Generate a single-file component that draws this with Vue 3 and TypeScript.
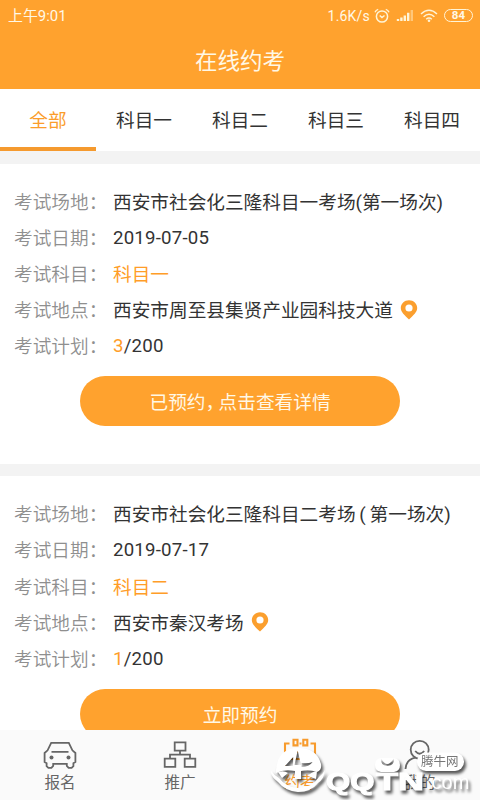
<script setup lang="ts">
import { ref } from 'vue'

interface Exam {
  id: number;
  place: string;
  date: string;
  subject: string;
  address: string;
  booked: number;
  total: number;
  action: string[];
}

const tabs = ['全部', '科目一', '科目二', '科目三', '科目四']
const activeTab = ref(0)

const exams: Exam[] = [
  {
    id: 1,
    place: '西安市社会化三隆科目一考场(第一场次)',
    date: '2019-07-05',
    subject: '科目一',
    address: '西安市周至县集贤产业园科技大道',
    booked: 3,
    total: 200,
    action: ['已预约', '点击查看详情']
  },
  {
    id: 2,
    place: '西安市社会化三隆科目二考场 ( 第一场次)',
    date: '2019-07-17',
    subject: '科目二',
    address: '西安市秦汉考场',
    booked: 1,
    total: 200,
    action: ['立即预约']
  }
]
</script>

<template>
  <div class="page">
    <header class="top">
      <div class="status">
        <span class="time">上午9:01</span>
        <div class="status-right">
          <span>1.6K/s</span>
          <svg class="alarm" width="16" height="16" viewBox="0 0 16 16">
            <circle cx="8" cy="8.5" r="5.6"/>
            <path d="M5.7 7.5L8 9.5l2.5-2M1 4.2Q2 2 4.2 1.4M15 4.2Q14 2 11.8 1.4"/>
          </svg>
          <svg class="signal" width="18" height="13" viewBox="0 0 18 13">
            <path d="M.8 10h2.4v2H.8zM4.2 8.6h2.4V12H4.2zM7.6 6.4H10V12H7.6zM11 3.8h2.4V12H11z"/>
            <path opacity=".45" d="M14.6 1H17v11h-2.4z"/>
          </svg>
          <svg class="wifi" width="18" height="14" viewBox="0 0 18 14">
            <path d="M1 5Q9-2.4 17 5M3.6 7.7Q9 2.8 14.4 7.7M6.2 10.2Q9 7.8 11.8 10.2"/>
            <circle cx="9" cy="11.7" r="1.3"/>
          </svg>
          <span class="battery">84</span>
        </div>
      </div>
      <h1>在线约考</h1>
    </header>

    <nav class="tabs">
      <div
        v-for="(tab, i) in tabs"
        :key="tab"
        class="tab"
        :class="{ active: i === activeTab }"
        @click="activeTab = i"
      >{{ tab }}</div>
    </nav>

    <main class="list">
      <section v-for="exam in exams" :key="exam.id" class="card">
        <div class="row"><span class="label">考试场地：</span><span class="zh">{{ exam.place }}</span></div>
        <div class="row"><span class="label">考试日期：</span><span class="num">{{ exam.date }}</span></div>
        <div class="row"><span class="label">考试科目：</span><span class="zh orange">{{ exam.subject }}</span></div>
        <div class="row">
          <span class="label">考试地点：</span><span class="zh">{{ exam.address }}</span>
          <svg class="pin" width="18" height="20" viewBox="0 0 18 20">
            <path fill-rule="evenodd" d="M9 .3C4.4.3.8 3.8.8 8.1c0 4.2 3.8 7.2 8.2 11.4 4.4-4.2 8.2-7.2 8.2-11.4C17.2 3.8 13.6.3 9 .3zM9 4.4a3.6 3.6 0 110 7.2 3.6 3.6 0 010-7.2z"/>
          </svg>
        </div>
        <div class="row">
          <span class="label">考试计划：</span><span class="num"><span class="orange">{{ exam.booked }}</span>/{{ exam.total }}</span>
        </div>
        <button class="action">
          <template v-for="(part, i) in exam.action" :key="part"><span v-if="i" class="comma">，</span>{{ part }}</template>
        </button>
      </section>
    </main>

    <footer class="bar">
      <div class="item">
        <svg width="34" height="28" viewBox="0 0 34 28">
          <path d="M8.2 1.8h17.6l3.6 7.5 3 2.7v9l-2 1.2v3l-1.8 1.7h-3l-1.8-2v-2H10.2v2l-1.8 2h-3l-1.8-1.7v-3l-2-1.2v-9l3-2.7zM8.5 10.8h17"/>
          <circle class="dot" cx="8.5" cy="16.5" r="2"/>
          <circle class="dot" cx="25.5" cy="16.5" r="2"/>
        </svg>
        <span>报名</span>
      </div>
      <div class="item">
        <svg width="34" height="28" viewBox="0 0 34 28">
          <path d="M11.7 1.4h10.8v8.3H11.7zM1.7 17.6h10.6v8.2H1.7zM21.7 17.6h10.6v8.2H21.7zM17 9.7v3.9M7 17.6v-4h20v4"/>
        </svg>
        <span>推广</span>
      </div>
      <div class="item current">
        <svg width="34" height="28" viewBox="0 0 34 28">
          <path d="M6.5 2.5H2v24.5h30V2.5H27.5M10.5-1.2h4v5.6h-4zM20.3-1.2h4v5.6h-4zM16.5 2.5h2M8 11h18M8 18h18"/>
        </svg>
        <span>约考</span>
      </div>
      <div class="item">
        <svg width="34" height="28" viewBox="0 0 34 28">
          <circle cx="16.7" cy="8.8" r="9"/>
          <path d="M12.2 10q4.5 5.5 9 0M2.5 28Q3 18.5 12.5 16.7M31 28Q30.5 18.5 21 16.7"/>
        </svg>
        <span>我的</span>
      </div>
    </footer>

    <div class="watermark">
      <svg class="mark" width="210" height="70" viewBox="0 0 210 70">
        <path fill-rule="evenodd" d="M6 40Q8 18 28 18q19 0 23 16 1 6-4 8-8-3-16-1v8h-6v-8Q14 39 6 43zM27.7 20.5L24.5 35h6.5zM23.2 27L15 36h8zM31.5 33q6 1 11-1-3 5-11 5z"/>
        <path d="M.7 40.5Q4 45 9 48q7 9 19 10 14 0 21-11 4-3 6-7-1 9-7 13-7 9-20 9-13-1-20-10-7-5-7.300-11.500z"/>
        <path d="M8 42q6-2 10 1l-6 5zM47 41q-6 1-9 5l8 3z"/>
        <path fill-rule="evenodd" d="M111 28h13q6 1 6 7t-6 7h-13q-6-1-6-7t6-7zM111 28q6 12 13 0 1 7-6.500 8-7.500-1-6.500-8z"/>
        <rect x="147" y="22.500" width="47" height="18.500" rx="9"/>
      </svg>
      <span class="name">QQ</span>
      <span class="name tn">TN</span>
      <span class="com">.com</span>
      <span class="cn">腾牛网</span>
    </div>
  </div>
</template>

<style>
body {
  margin: 0;
}
</style>

<style scoped>
.page {
  position: relative;
  width: 480px;
  height: 800px;
  overflow: hidden;
  display: flex;
  flex-direction: column;
  background: #fff;
  color: #333;
  font-family: Roboto, "Noto Sans CJK SC", sans-serif;
  font-size: 18.67px;
}

.top {
  flex: none;
  height: 89px;
  background: #ffa22e;
  color: #fff8e6;
}

.status {
  height: 31px;
  padding: 0 7px 0 8px;
  display: flex;
  align-items: center;
  justify-content: space-between;
  font-size: 14px;
}

.time {
  font-size: 14.9px;
  line-height: 20px;
}

.status-right {
  display: flex;
  align-items: center;
  letter-spacing: 0.2px;
}

.alarm,
.wifi {
  fill: none;
  stroke: #fff4d6;
  stroke-width: 1.5;
}

.alarm {
  margin-left: 4px;
}

.signal {
  margin-left: 6px;
  fill: #fff4d6;
}

.wifi {
  margin: 0 6px;
}

.wifi circle {
  fill: #fff4d6;
  stroke: none;
}

.battery {
  box-sizing: border-box;
  width: 29px;
  height: 13px;
  border: 1.5px solid #fff4d6;
  border-radius: 7px;
  text-align: center;
  font-size: 11.5px;
  font-weight: 700;
  line-height: 11px;
}

h1 {
  margin: 0;
  text-align: center;
  font-size: 22.5px;
  font-weight: 400;
  line-height: 61px;
}

.tabs {
  flex: none;
  height: 62px;
  display: flex;
}

.tab {
  box-sizing: border-box;
  flex: 1;
  height: 62px;
  text-align: center;
  line-height: 65px;
  border-bottom: 4px solid transparent;
}

.tab.active {
  color: #fb9d2b;
  border-color: #f59a2e;
}

.list {
  flex: 1;
  min-height: 0;
  overflow: hidden;
  background: #f3f3f3;
}

.card {
  box-sizing: border-box;
  height: 300px;
  margin-top: 12.6px;
  padding-top: 20px;
  background: #fff;
}

.row {
  height: 36.2px;
  padding-left: 14px;
  display: flex;
  align-items: center;
  white-space: pre;
}

.label,
.zh {
  padding-bottom: 3px;
  word-spacing: -0.8px;
}

.label {
  width: 99px;
  color: #8f8f8f;
  font-weight: 350;
}

.num {
  letter-spacing: 0.2px;
}

.orange {
  color: #ff9d28;
}

.pin {
  margin: 0 0 1px 7px;
  fill: #fb9f2e;
}

.action {
  display: block;
  width: 320px;
  height: 50px;
  margin: 11.5px auto 0;
  padding: 0 0 1px;
  border: none;
  border-radius: 25px;
  background: #ffa22e;
  color: #fff8e6;
  font: inherit;
}

.comma {
  letter-spacing: -5.5px;
}

.bar {
  flex: none;
  height: 70px;
  display: flex;
  background: #fafafa;
}

.item {
  flex: 1;
  padding-top: 11px;
  display: flex;
  flex-direction: column;
  align-items: center;
  color: #666;
  font-size: 15.6px;
  line-height: 28px;
}

.item svg {
  overflow: visible;
  fill: none;
  stroke: #666;
  stroke-width: 1.8;
}

.item .dot {
  fill: #666;
  stroke: none;
}

.item.current {
  color: #f79b2d;
}

.item.current svg {
  stroke: #f79b2d;
  stroke-width: 2.1;
}

.watermark {
  position: absolute;
  left: 270px;
  top: 730px;
  width: 210px;
  height: 70px;
  color: #fff;
  font-family: "Liberation Sans", sans-serif;
  filter: drop-shadow(2px 3px 1.5px rgba(0, 0, 0, 0.65));
}

.watermark span,
.mark {
  position: absolute;
  white-space: nowrap;
  line-height: 1;
}

.mark {
  left: 0;
  top: 0;
  fill: #fff;
}

.watermark .name {
  left: 56px;
  top: 40px;
  font-size: 24px;
  font-weight: 700;
  -webkit-text-stroke: 1px #fff;
  transform: scaleX(1.3);
  transform-origin: left;
}

.watermark .tn {
  left: 106px;
  transform: scaleX(1.5);
}

.watermark .com {
  left: 156px;
  top: 42px;
  font-size: 20px;
}

.watermark .cn {
  left: 151px;
  top: 25px;
  color: #777;
  font-family: "Noto Sans CJK SC", sans-serif;
  font-size: 12.5px;
}
</style>
